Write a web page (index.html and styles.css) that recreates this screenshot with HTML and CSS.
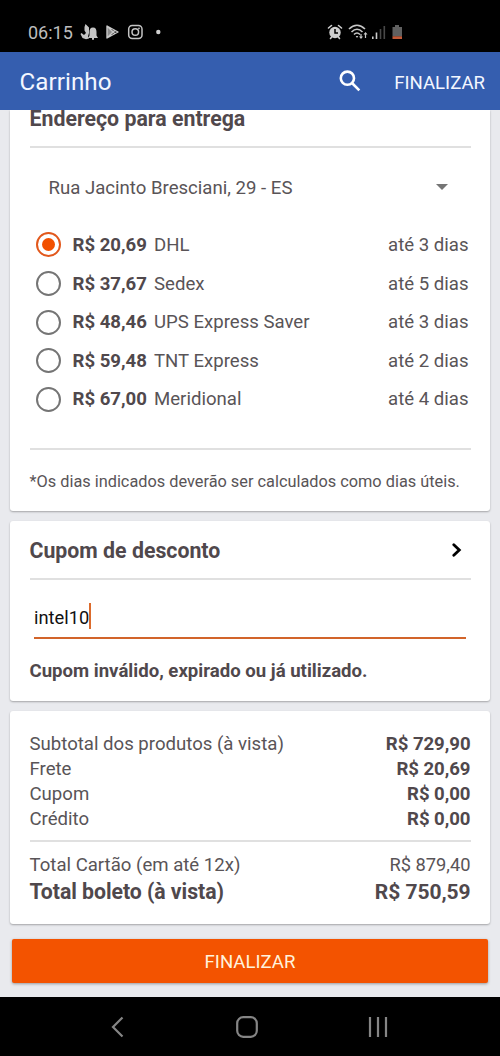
FILE: index.html
```html
<!DOCTYPE html>
<html lang="pt-BR">
<head>
<meta charset="utf-8">
<title>Carrinho</title>
<link rel="stylesheet" href="styles.css">
</head>
<body>
<div class="screen">
  <div class="status">
    <span class="clock">06:15</span>
    <svg class="status-left" width="90" height="20" viewBox="0 0 90 20">
      <g fill="#c4c4c4">
        <path d="M5.500 2L9 5.500v5.500l-1 3.500 1 2-3 .8-3.500-1.300L.5 12l1-1 2.500 2L6 11 4.500 8.500 4.500 5z"/>
        <path d="M13 5.500c-2.700 0-3.500 2-3.500 4.500v3.500L8 16h10l-1.500-2.500V10c0-2.500-.8-4.500-3.500-4.500zM12 16h2v1.800h-2z"/>
      </g>
      <path d="M27 4.500v11L35 10z" fill="#8d8d8d"/>
      <path d="M27 4v12L38 10zM27 4l8 8M27 16l8-8" fill="none" stroke="#c8c8c8" stroke-width="1.400" stroke-linejoin="round"/>
      <g fill="none" stroke="#c4c4c4" stroke-width="1.500">
        <rect x="48.700" y="3.500" width="13.300" height="13" rx="3.500"/>
        <circle cx="55.300" cy="10" r="3.300"/>
      </g>
      <circle cx="59" cy="6.300" r=".9" fill="#c4c4c4"/>
      <circle cx="78.300" cy="10" r="2.200" fill="#d0d0d0"/>
    </svg>
    <svg class="status-right" width="80" height="20" viewBox="0 0 80 20">
      <g stroke="#d0d0d0" fill="none" stroke-width="1.600" stroke-linecap="round">
        <path d="M1.500 6l3-2.500M14.500 6l-3-2.500M3.500 16.500l1.500-2M12.500 16.500l-1.500-2"/>
      </g>
      <circle cx="8" cy="10.500" r="5.700" fill="#d0d0d0"/>
      <path d="M8 7v4h3" fill="none" stroke="#000" stroke-width="1.500"/>
      <g fill="none" stroke="#c8c8c8" stroke-width="1.600">
        <path d="M22 7c5-5 11-5 16 0M24.500 10c3.500-3.500 7.500-3.500 11 0M27 12.500c2-2 4-2 6 0"/>
        <path d="M34 12v4M38.500 16v-5" stroke-width="1.200"/>
      </g>
      <path d="M32 14.500h4l-2 2.500zM36.500 12.500h4l-2-2.500zM28.700 14h2.600l-1.300 2z" fill="#c8c8c8"/>
      <path d="M45 14.500h1.600V17H45zM48.700 10.500h1.600V17h-1.600z" fill="#ccc"/>
      <path d="M52.700 7h1.600v10h-1.600zM56.500 4h1.600v13h-1.600z" fill="#484848"/>
      <path d="M68 3h4v2h3v9.500h-9.500V5H68z" fill="#606060"/>
      <path d="M65.500 14.300H75V17h-9.500z" fill="#c25a38"/>
    </svg>
  </div>

  <header class="appbar">
    <h1 class="title">Carrinho</h1>
    <svg class="search" width="24" height="24" viewBox="0 0 24 24">
      <circle cx="9.400" cy="9.200" r="6.600"/>
      <path d="M14 14l7.300 7.300"/>
    </svg>
    <span class="action">FINALIZAR</span>
  </header>

  <main class="content">
    <section class="card delivery">
      <h2 class="heading">Endereço para entrega</h2>
      <div class="address"><span>Rua Jacinto Bresciani, 29 - ES</span><i class="caret"></i></div>
      <div class="options">
        <div class="option"><i class="radio on"></i><b>R$ 20,69</b><span>DHL</span><span class="days">até 3 dias</span></div>
        <div class="option"><i class="radio"></i><b>R$ 37,67</b><span>Sedex</span><span class="days">até 5 dias</span></div>
        <div class="option"><i class="radio"></i><b>R$ 48,46</b><span>UPS Express Saver</span><span class="days">até 3 dias</span></div>
        <div class="option"><i class="radio"></i><b>R$ 59,48</b><span>TNT Express</span><span class="days">até 2 dias</span></div>
        <div class="option"><i class="radio"></i><b>R$ 67,00</b><span>Meridional</span><span class="days">até 4 dias</span></div>
      </div>
      <p class="note">*Os dias indicados deverão ser calculados como dias úteis.</p>
    </section>

    <section class="card coupon">
      <div class="coupon-head">
        <h2 class="coupon-title">Cupom de desconto</h2>
        <svg class="chevron" width="12" height="16" viewBox="0 0 12 16"><path d="M2.800 1.800L8.300 7l-5.500 5.200"/></svg>
      </div>
      <div class="field"><span class="value">intel10</span><i class="cursor"></i></div>
      <p class="error">Cupom inválido, expirado ou já utilizado.</p>
    </section>

    <section class="card summary">
      <div class="line"><span>Subtotal dos produtos (à vista)</span><b>R$ 729,90</b></div>
      <div class="line"><span>Frete</span><b>R$ 20,69</b></div>
      <div class="line"><span>Cupom</span><b>R$ 0,00</b></div>
      <div class="line"><span>Crédito</span><b>R$ 0,00</b></div>
      <div class="totals">
        <div class="line"><span>Total Cartão (em até 12x)</span><span class="card-total">R$ 879,40</span></div>
        <div class="line grand"><b>Total boleto (à vista)</b><b class="grand-total">R$ 750,59</b></div>
      </div>
    </section>

    <div class="submit">FINALIZAR</div>
  </main>

  <nav class="navbar">
    <svg width="14" height="22" viewBox="0 0 14 22"><path d="M11.500 1.500L2 11l9.500 9.500"/></svg>
    <svg class="home" width="22" height="22" viewBox="0 0 22 22"><rect x="1.200" y="1.200" width="19.600" height="19.600" rx="6"/></svg>
    <svg width="22" height="22" viewBox="0 0 22 22"><path d="M3 1v20M11 1v20M19 1v20"/></svg>
  </nav>
</div>
</body>
</html>
```

FILE: styles.css
```css
* { box-sizing: border-box; }
body { margin: 0; font-family: Roboto, sans-serif; color: #595457; }
h1, h2, p { margin: 0; }
b, h2 { color: #50484c; font-weight: 700; }
.screen { width: 500px; height: 1056px; display: flex; flex-direction: column; overflow: hidden; }

.status { height: 52px; flex: none; background: #000; display: flex; align-items: center; padding: 12px 93px 0 28px; }
.clock { font-size: 18px; color: #bdbdbd; width: 52px; }
.status-right { margin-left: auto; }

.appbar { height: 58px; flex: none; background: #355eaf; color: #f3f7ff; display: flex; align-items: center; padding: 2px 15px 0 19.500px; }
.title { font-size: 24.200px; font-weight: 400; flex: 1; letter-spacing: .05px; }
.search { fill: none; stroke: #fff; stroke-width: 2.600; margin: -3px 32px 0 0; }
.action { font-size: 18.600px; padding-top: 1px; }

.content { flex: 1; min-height: 0; overflow: hidden; background: #e9eaee; padding: 0 10px; display: flex; flex-direction: column; }
.card { flex: none; background: #fff; border-radius: 3px; box-shadow: 0 1px 2px rgba(0,0,0,.3); padding: 0 19.500px; margin-bottom: 10px; }

.delivery { height: 400.500px; border-radius: 0 0 3px 3px; }
.heading { height: 37.500px; border-bottom: 2px solid #e0e0e0; font-size: 21.300px; line-height: 18px; }
.address { height: 78.500px; display: flex; align-items: center; justify-content: space-between; padding: 2px 23px 0 19px; font-size: 18.600px; }
.caret { border: 6.500px solid transparent; border-top-color: #757575; border-bottom: 0; margin-top: -2px; }
.options { height: 224px; border-bottom: 2px solid #e0e0e0; padding: 0 2px 0 6px; font-size: 18.600px; }
.option { height: 38.700px; display: flex; align-items: center; }
.option b { width: 81.500px; }
.option b, .option span { margin-top: -1px; }
.option:nth-child(n+5) b, .option:nth-child(n+5) span { margin-top: -2px; }
.radio { width: 25px; height: 25px; border: 2.500px solid #757575; border-radius: 50%; margin: -1px 12px 0 0; display: flex; }
.radio.on { border-color: #e2581c; }
.radio.on::before { content: ""; width: 13px; height: 13px; border-radius: 50%; background: #f25000; margin: auto; }
.days { margin-left: auto; }
.note { font-size: 16.320px; line-height: 64px; white-space: nowrap; }

.coupon { height: 180.500px; }
.coupon-head { height: 59.500px; border-bottom: 2px solid #e0e0e0; display: flex; align-items: center; justify-content: space-between; padding: 3px 8px 0 0; }
.coupon-title { font-size: 21.300px; }
.chevron { fill: none; stroke: #000; stroke-width: 2.800; stroke-linecap: round; }
.field { height: 58.500px; margin: 0 4.500px; border-bottom: 2px solid #d2642a; display: flex; align-items: center; padding-top: 18px; font-size: 18.300px; color: #111; }
.cursor { width: 2px; height: 26px; background: #dc6b2c; margin-top: -2px; }
.error { font-size: 18.600px; line-height: 64px; font-weight: 700; color: #50484c; }

.summary { height: 213px; padding-top: 20.500px; font-size: 18.600px; }
.summary b { letter-spacing: -.05px; }
.line { height: 25px; display: flex; align-items: center; justify-content: space-between; }
.totals { margin-top: 8px; border-top: 2px solid #e0e0e0; padding-top: 10.500px; }
.card-total { font-size: 18.300px; }
.grand { height: 29px; font-size: 21.250px; }
.grand-total { font-size: 21px; }

.submit { flex: none; height: 44px; margin: 5px 2px 0; border-radius: 2px; background: #f35300; color: #fff2dc; font-size: 18.600px; line-height: 46px; text-align: center; box-shadow: 0 1px 3px rgba(0,0,0,.35); }

.navbar { height: 59px; flex: none; background: #000; display: flex; align-items: center; justify-content: space-between; padding: 0 111px; }
.navbar svg { fill: none; stroke: #858585; stroke-width: 2.200; }
.navbar .home { margin-left: 2px; }
```
